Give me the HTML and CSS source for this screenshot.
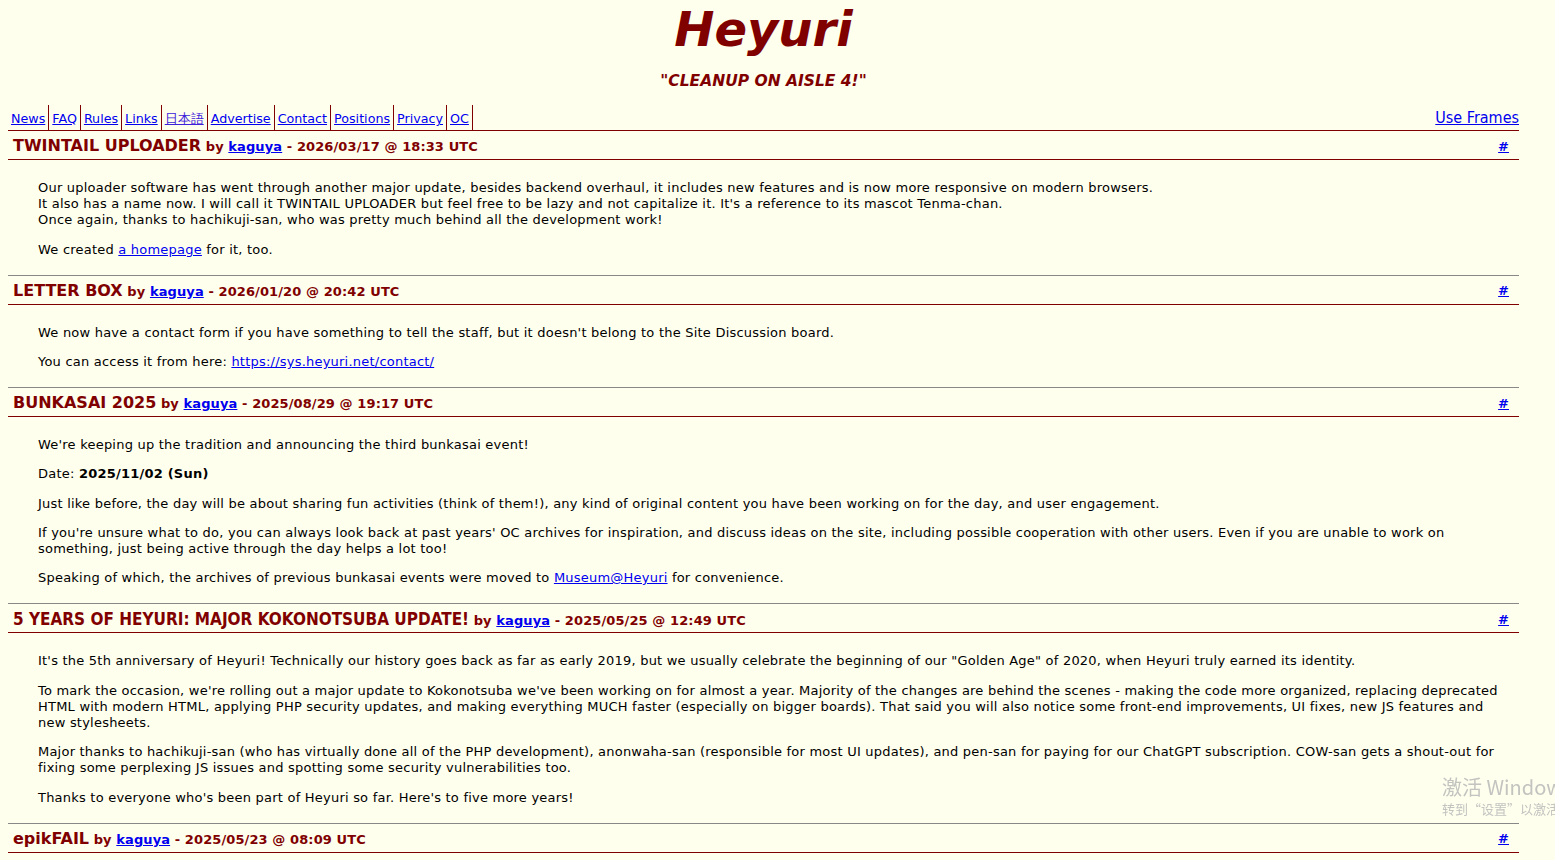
FILE: index.html
```html
<!DOCTYPE html>
<html lang="en">

<head>
    <meta charset="UTF-8">
    <title>Heyuri</title>
    <link rel="stylesheet" href="styles.css">
</head>

<body>
    <div class="page">
        <div class="logo">
            <h1>Heyuri</h1>
            <p class="tagline">"CLEANUP ON AISLE 4!"</p>
        </div>

        <div class="nav">
            <ul class="nav-links">
                <li><a href="#">News</a></li>
                <li><a href="#">FAQ</a></li>
                <li><a href="#">Rules</a></li>
                <li><a href="#">Links</a></li>
                <li><a href="#" class="visited">日本語</a></li>
                <li><a href="#">Advertise</a></li>
                <li><a href="#">Contact</a></li>
                <li><a href="#">Positions</a></li>
                <li><a href="#">Privacy</a></li>
                <li><a href="#">OC</a></li>
            </ul>
            <a href="#" class="frames">Use Frames</a>
        </div>

        <!-- news posts -->
        <div class="post first">
            <div class="post-head">
                <h2><span class="title">TWINTAIL UPLOADER</span> by <a href="#">kaguya</a> - 2026/03/17 @ 18:33 UTC</h2>
                <a href="#" class="permalink">#</a>
            </div>
            <div class="post-body">
                <p>Our uploader software has went through another major update, besides backend overhaul, it includes new features and is now more responsive on modern browsers.<br>
                It also has a name now. I will call it TWINTAIL UPLOADER but feel free to be lazy and not capitalize it. It's a reference to its mascot Tenma-chan.<br>
                Once again, thanks to hachikuji-san, who was pretty much behind all the development work!</p>
                <p>We created <a href="#">a homepage</a> for it, too.</p>
            </div>
        </div>

        <div class="post">
            <div class="post-head">
                <h2><span class="title">LETTER BOX</span> by <a href="#">kaguya</a> - 2026/01/20 @ 20:42 UTC</h2>
                <a href="#" class="permalink">#</a>
            </div>
            <div class="post-body">
                <p>We now have a contact form if you have something to tell the staff, but it doesn't belong to the Site Discussion board.</p>
                <p>You can access it from here: <a href="#">https://sys.heyuri.net/contact/</a></p>
            </div>
        </div>

        <div class="post">
            <div class="post-head">
                <h2><span class="title">BUNKASAI 2025</span> by <a href="#">kaguya</a> - 2025/08/29 @ 19:17 UTC</h2>
                <a href="#" class="permalink">#</a>
            </div>
            <div class="post-body">
                <p>We're keeping up the tradition and announcing the third bunkasai event!</p>
                <p>Date: <b>2025/11/02 (Sun)</b></p>
                <p>Just like before, the day will be about sharing fun activities (think of them!), any kind of original content you have been working on for the day, and user engagement.</p>
                <p>If you're unsure what to do, you can always look back at past years' OC archives for inspiration, and discuss ideas on the site, including possible cooperation with other users. Even if you are unable to work on something, just being active through the day helps a lot too!</p>
                <p>Speaking of which, the archives of previous bunkasai events were moved to <a href="#">Museum@Heyuri</a> for convenience.</p>
            </div>
        </div>

        <div class="post">
            <div class="post-head">
                <h2><span class="title narrow">5 YEARS OF HEYURI: MAJOR KOKONOTSUBA UPDATE!</span> by <a href="#">kaguya</a> - 2025/05/25 @ 12:49 UTC</h2>
                <a href="#" class="permalink">#</a>
            </div>
            <div class="post-body">
                <p>It's the 5th anniversary of Heyuri! Technically our history goes back as far as early 2019, but we usually celebrate the beginning of our "Golden Age" of 2020, when Heyuri truly earned its identity.</p>
                <p>To mark the occasion, we're rolling out a major update to Kokonotsuba we've been working on for almost a year. Majority of the changes are behind the scenes - making the code more organized, replacing deprecated HTML with modern HTML, applying PHP security updates, and making everything MUCH faster (especially on bigger boards). That said you will also notice some front-end improvements, UI fixes, new JS features and new stylesheets.</p>
                <p>Major thanks to hachikuji-san (who has virtually done all of the PHP development), anonwaha-san (responsible for most UI updates), and pen-san for paying for our ChatGPT subscription. COW-san gets a shout-out for fixing some perplexing JS issues and spotting some security vulnerabilities too.</p>
                <p>Thanks to everyone who's been part of Heyuri so far. Here's to five more years!</p>
            </div>
        </div>

        <div class="post">
            <div class="post-head">
                <h2><span class="title">epikFAIL</span> by <a href="#">kaguya</a> - 2025/05/23 @ 08:09 UTC</h2>
                <a href="#" class="permalink">#</a>
            </div>
            <div class="post-body">
                <p>The board software had a little accident today, sorry for the trouble.</p>
            </div>
        </div>
    </div>

    <div class="activate">
        <div class="activate-big">激活 Windows</div>
        <div class="activate-small">转到“设置”以激活 Windows。</div>
    </div>
</body>

</html>
```

FILE: styles.css
```css
body {
    font-family: 'DejaVu Sans', Verdana, sans-serif;
    font-size: 13px;
    line-height: 16px;
    margin: 0 8px;
    background-color: #ffffee;
    color: #000;
}

a {
    color: #0000ee;
}

a.visited {
    color: #3d22d9;
}

.page {
    width: 1511px;
}

/* site title */
.logo {
    text-align: center;
    color: #800000;
}

.logo h1 {
    margin: 3px 0 0;
    font-size: 48px;
    line-height: 52px;
    font-style: italic;
    font-weight: bold;
}

.tagline {
    margin: 16px 0 0;
    font-size: 15.5px;
    line-height: 20px;
    font-style: italic;
    font-weight: bold;
}

/* navigation */
.nav {
    display: flex;
    justify-content: space-between;
    align-items: flex-end;
    margin-top: 14px;
    border-bottom: 1px solid #800000;
}

.nav-links {
    display: flex;
    list-style: none;
    margin: 0;
    padding: 0;
    font-size: 12.7px;
}

.nav-links li {
    padding: 6px 3px 3px;
    border-right: 1px solid #800000;
}

.frames {
    font-family: 'DejaVu Sans Condensed', 'DejaVu Sans', sans-serif;
    font-size: 16px;
    line-height: 20px;
    padding-bottom: 2px;
}

/* posts */
.post {
    border-top: 1px solid #888;
}

.post.first {
    border-top: none;
}

.post-head {
    display: flex;
    justify-content: space-between;
    align-items: center;
    height: 25px;
    padding: 3px 10px 0 5px;
    border-bottom: 1px solid #800000;
}

.post-head h2 {
    margin: 0;
    font-size: 13px;
    line-height: 20px;
    letter-spacing: 0.1px;
    color: #800000;
}

.post-head .title {
    font-size: 16px;
    letter-spacing: 0;
}

.post-head .narrow {
    font-family: 'DejaVu Sans Condensed', 'DejaVu Sans', sans-serif;
    font-size: 17px;
}

.permalink {
    font-weight: bold;
    font-size: 13px;
}

.post-body {
    padding: 7px 14px 4px 30px;
    line-height: 16.2px;
    letter-spacing: 0.22px;
}

.post-body p {
    margin: 13px 0;
}

/* os notice in the corner */
.activate {
    position: fixed;
    left: 1442px;
    top: 774px;
    color: #c3c3c0;
    white-space: nowrap;
    font-family: 'Noto Sans CJK SC', sans-serif;
}

.activate-big {
    font-size: 20px;
    line-height: 26px;
}

.activate-small {
    font-size: 13px;
    line-height: 18px;
}
```
